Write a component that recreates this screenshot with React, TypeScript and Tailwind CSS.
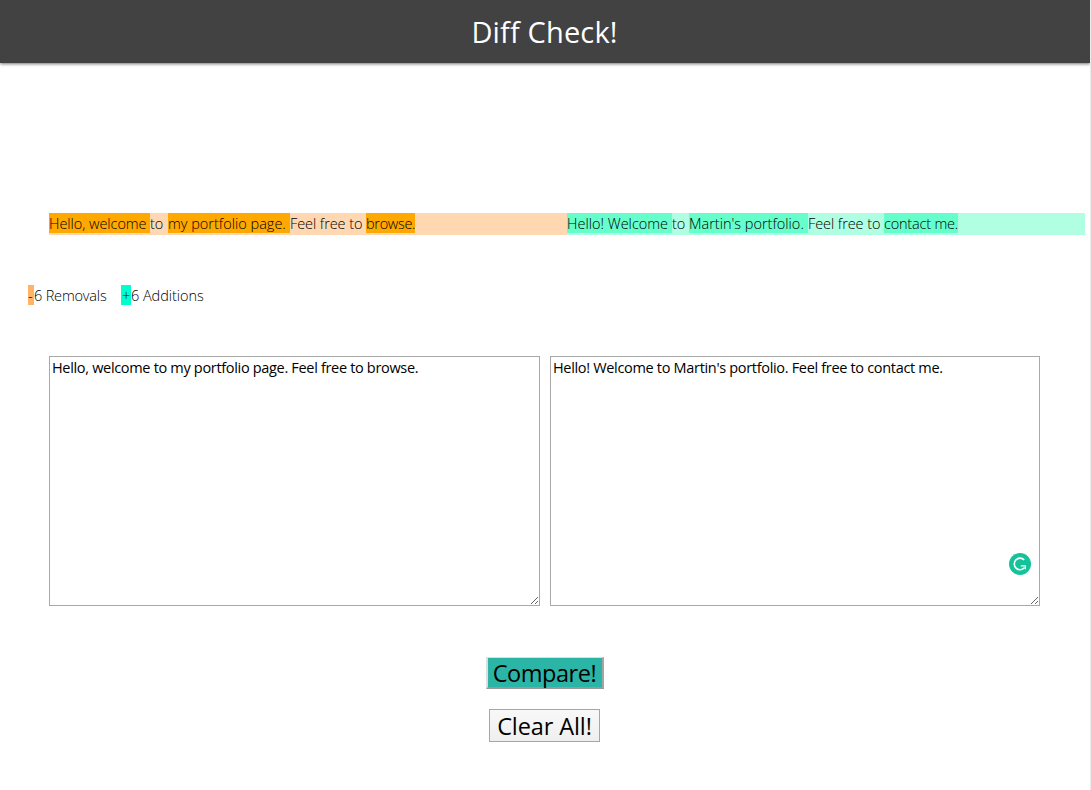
import { useState } from "react";

type Segment = { text: string; width: string; changed?: boolean };

const before: Segment[] = [
  { text: "Hello, welcome ", width: "w-[101px] tracking-[-0.05px]", changed: true },
  { text: "to ", width: "w-[18px]" },
  { text: "my portfolio page. ", width: "w-[122px] tracking-[0px]", changed: true },
  { text: "Feel free to ", width: "w-[76px] tracking-[-0.08px]" },
  { text: "browse.", width: "w-[49px] tracking-[-0.32px]", changed: true },
];

const after: Segment[] = [
  { text: "Hello! Welcome ", width: "w-[105px] tracking-[0px]", changed: true },
  { text: "to ", width: "w-[17px]" },
  { text: "Martin's portfolio. ", width: "w-[119px] tracking-[0px]", changed: true },
  { text: "Feel free to ", width: "w-[76px] tracking-[-0.08px]" },
  { text: "contact me.", width: "w-[74px] tracking-[-0.2px]", changed: true },
];

function DiffLine({ segments, line, mark }: { segments: Segment[]; line: string; mark: string }) {
  return (
    <div className={`flex h-[22px] w-[518px] whitespace-pre font-[350] leading-[22px] text-black ${line}`}>
      {segments.map((s, i) => (
        <span key={i} className={`block h-5 shrink-0 ${s.width} ${s.changed ? mark : ""}`}>
          {s.text}
        </span>
      ))}
    </div>
  );
}

export default function App() {
  const [left, setLeft] = useState("Hello, welcome to my portfolio page. Feel free to browse.");
  const [right, setRight] = useState("Hello! Welcome to Martin's portfolio. Feel free to contact me.");
  const area =
    "block h-[250px] resize border border-[#a9a9a9] bg-white px-[2px] pb-[1px] text-[14.5px] leading-[21px] tracking-[-0.32px] text-black outline-none";

  return (
    <div className="h-[790px] w-[1091px] overflow-hidden border-r border-[#ededed] bg-white font-['Open_Sans','Noto_Sans',sans-serif] text-[14.5px] tracking-[-0.05px]">
      <header className="flex h-[63px] items-center justify-center bg-[#424242] pr-[1px] shadow-[0_1px_3px_rgba(0,0,0,0.55)]">
        <h1 className="text-[29px] leading-[40px] tracking-[0.15px] text-white">Diff Check!</h1>
      </header>

      <section className="mt-[150px] ml-[49px] flex">
        <DiffLine segments={before} line="bg-[#ffd8b1]" mark="bg-[#ffa900]" />
        <DiffLine segments={after} line="bg-[#b1ffe3]" mark="bg-[#66ffcc]" />
      </section>

      <div className="mt-[50px] ml-7 flex h-5 whitespace-pre font-[350] leading-[22px] text-black">
        <span className="w-[6px] bg-[#ffb366]">-</span>
        <span className="w-[87px] tracking-[-0.18px]">6 Removals</span>
        <span className="w-[10px] bg-[#00ffcc] pl-px">+</span>
        <span>6 Additions</span>
      </div>

      <main className="relative mt-[51px] ml-[49px] flex w-[991px] gap-[10px]">
        <textarea spellCheck={false} className={`${area} w-[491px]`} value={left} onChange={(e) => setLeft(e.target.value)} />
        <textarea spellCheck={false} className={`${area} w-[490px]`} value={right} onChange={(e) => setRight(e.target.value)} />
        <svg className="absolute top-[197px] right-[9px] size-[22px]" viewBox="0 0 22 22" fill="none">
          <circle cx="11" cy="11" r="11" fill="#15c39a" />
          <path d="M15.2 6.9A5.8 5.8 0 1 0 15.4 14.8" stroke="white" strokeWidth="1.6" />
          <path d="M11.8 12.2H16.9V16.8L15.2 15.1L16 13.6H11.8Z" fill="white" />
        </svg>
      </main>

      <div className="mt-[51px] flex flex-col items-center pr-px text-black">
        <button
          className="h-8 w-[118px] whitespace-nowrap border-2 border-t border-[#dedede] border-r-[#a5a5a5] border-b-[#999999] bg-[#2bb5a6] text-[23.5px] leading-[31px] tracking-[-0.45px]"
        >
          Compare!
        </button>
        <button
          onClick={() => {
            setLeft("");
            setRight("");
          }}
          className="mt-5 h-[33px] w-[111px] whitespace-nowrap border border-[#a6a6a6] bg-linear-to-b from-[#f8f8f8] to-[#efefef] text-[23.5px] leading-[32px] tracking-[-0.1px]"
        >
          Clear All!
        </button>
      </div>
    </div>
  );
}
